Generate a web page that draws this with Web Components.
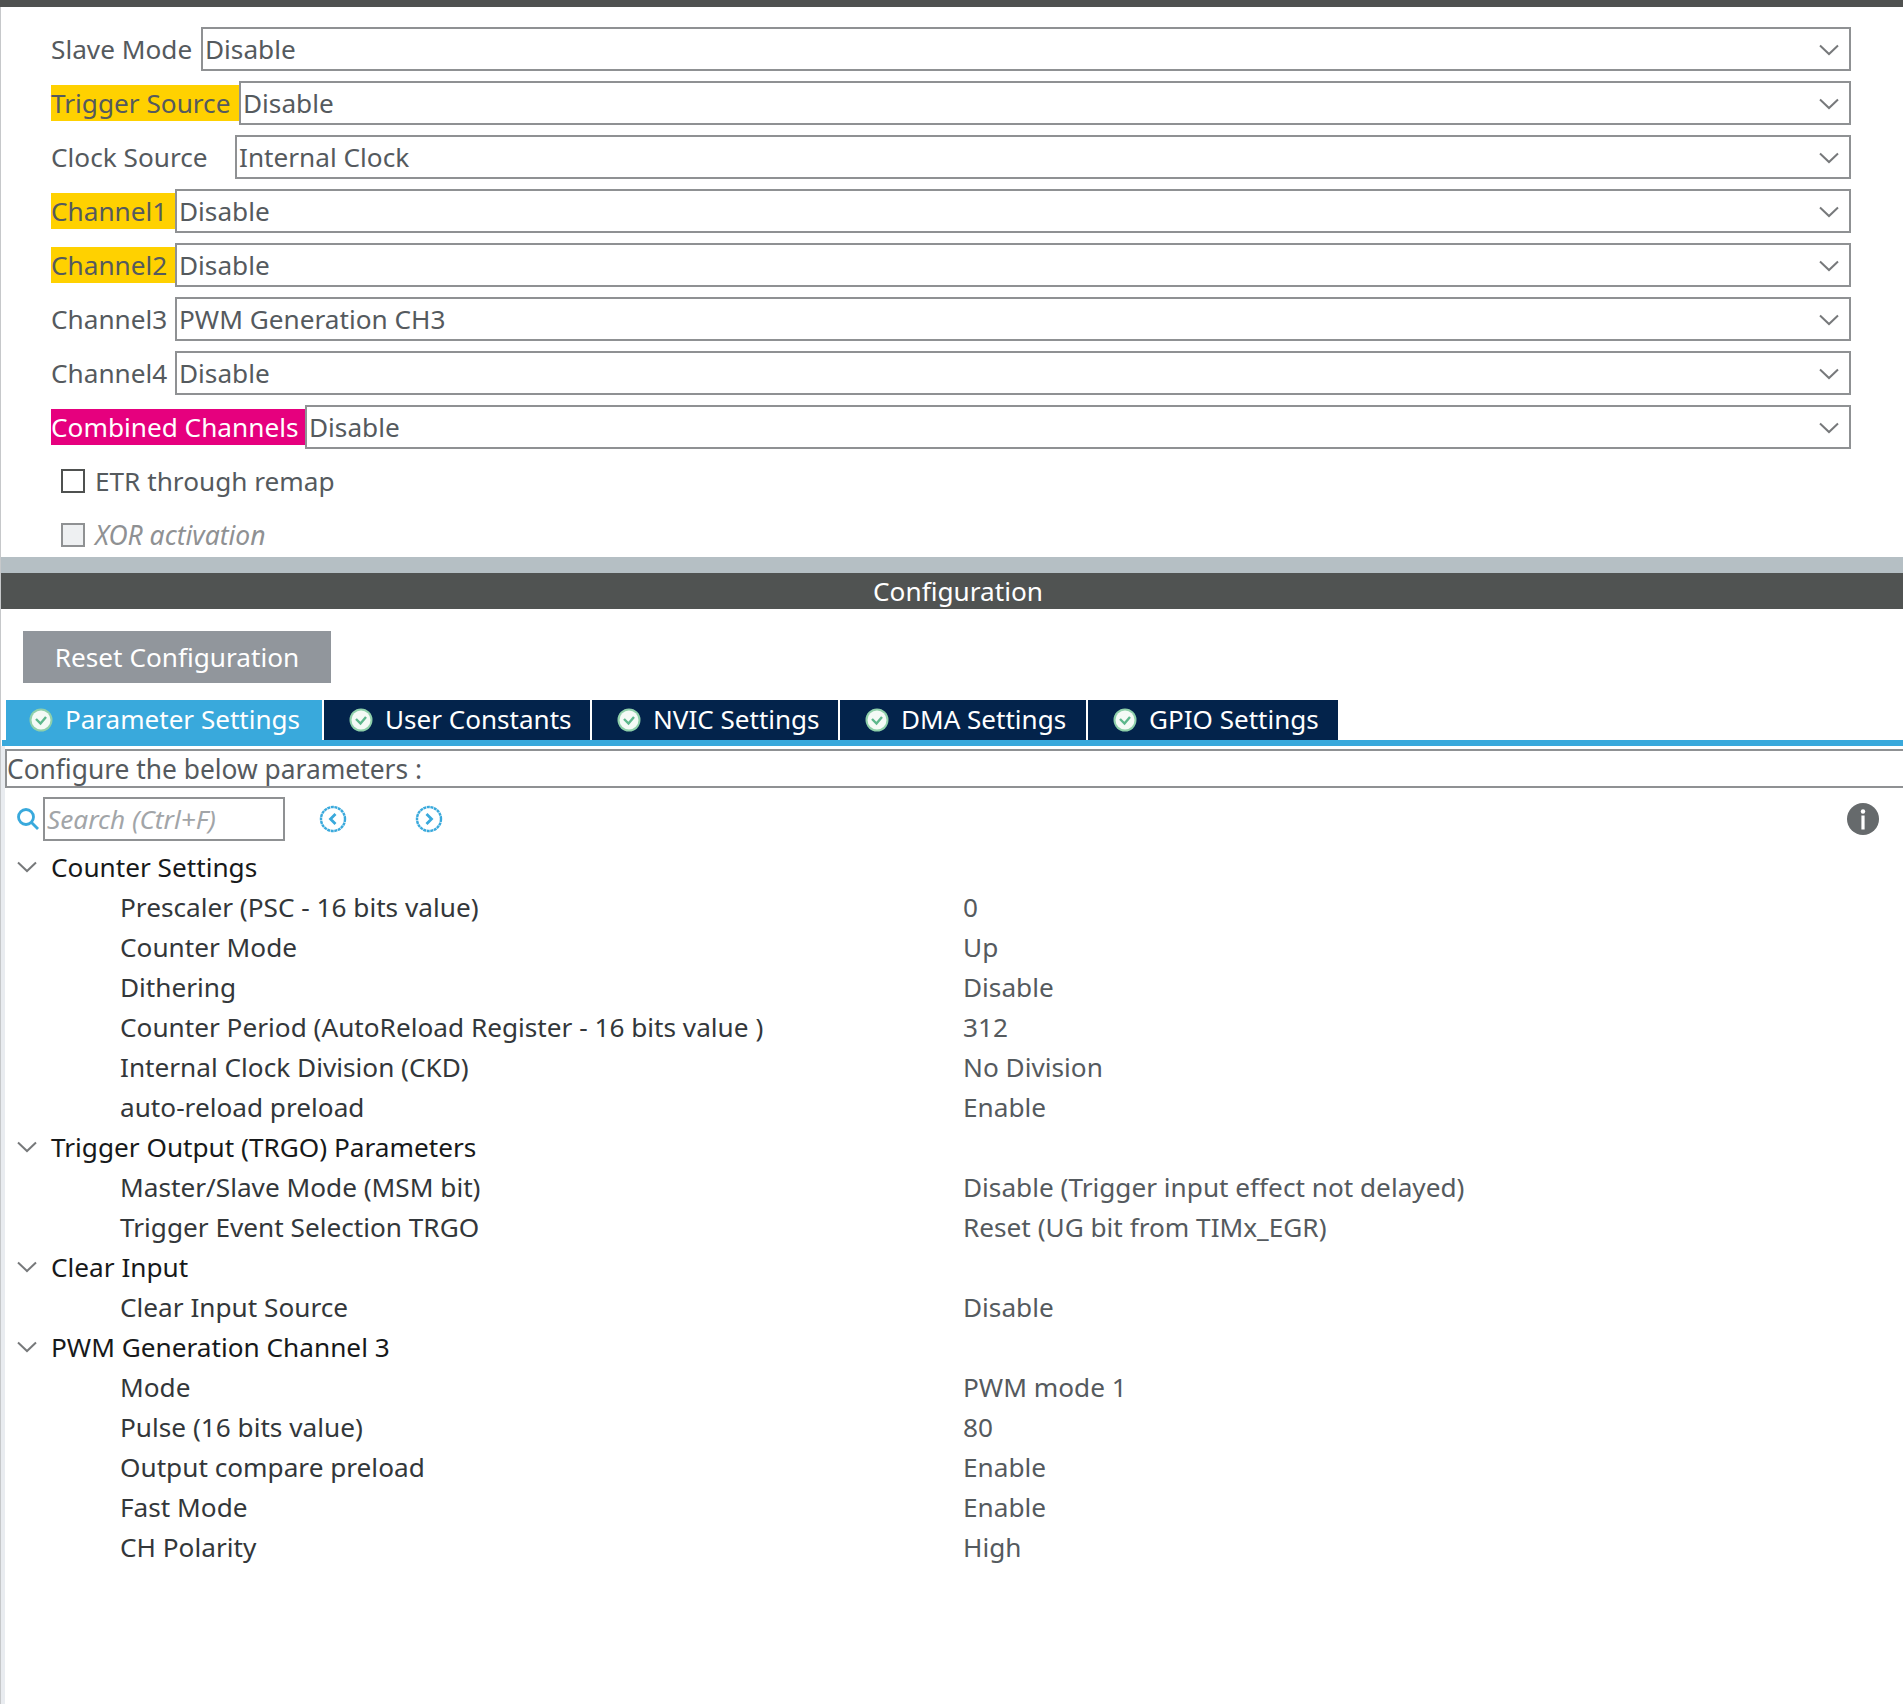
<!DOCTYPE html>
<html><head><meta charset="utf-8"><style>
html,body{margin:0;padding:0;background:#fff}
body{font-family:"Noto Sans",sans-serif;font-size:26.2px;color:#555a5e;width:1903px;height:1704px;overflow:hidden}
</style></head><body>
<stm-page>
 <stm-select-row label="Slave Mode" value="Disable" lw="150"></stm-select-row>
 <stm-select-row label="Trigger Source" value="Disable" lw="188" mark="#ffd100"></stm-select-row>
 <stm-select-row label="Clock Source" value="Internal Clock" lw="184"></stm-select-row>
 <stm-select-row label="Channel1" value="Disable" lw="124" mark="#ffd100"></stm-select-row>
 <stm-select-row label="Channel2" value="Disable" lw="124" mark="#ffd100"></stm-select-row>
 <stm-select-row label="Channel3" value="PWM Generation CH3" lw="124"></stm-select-row>
 <stm-select-row label="Channel4" value="Disable" lw="124"></stm-select-row>
 <stm-select-row label="Combined Channels" value="Disable" lw="254" mark="#e6007e" fg="#fff"></stm-select-row>
 <stm-check label="ETR through remap"></stm-check>
 <stm-check label="XOR activation" disabled></stm-check>
 <stm-config>
  <stm-tree-group label="Counter Settings">
   <stm-tree-row label="Prescaler (PSC - 16 bits value)" value="0"></stm-tree-row>
   <stm-tree-row label="Counter Mode" value="Up"></stm-tree-row>
   <stm-tree-row label="Dithering" value="Disable"></stm-tree-row>
   <stm-tree-row label="Counter Period (AutoReload Register - 16 bits value )" value="312"></stm-tree-row>
   <stm-tree-row label="Internal Clock Division (CKD)" value="No Division"></stm-tree-row>
   <stm-tree-row label="auto-reload preload" value="Enable"></stm-tree-row>
  </stm-tree-group>
  <stm-tree-group label="Trigger Output (TRGO) Parameters">
   <stm-tree-row label="Master/Slave Mode (MSM bit)" value="Disable (Trigger input effect not delayed)"></stm-tree-row>
   <stm-tree-row label="Trigger Event Selection TRGO" value="Reset (UG bit from TIMx_EGR)"></stm-tree-row>
  </stm-tree-group>
  <stm-tree-group label="Clear Input">
   <stm-tree-row label="Clear Input Source" value="Disable"></stm-tree-row>
  </stm-tree-group>
  <stm-tree-group label="PWM Generation Channel 3">
   <stm-tree-row label="Mode" value="PWM mode 1"></stm-tree-row>
   <stm-tree-row label="Pulse (16 bits value)" value="80"></stm-tree-row>
   <stm-tree-row label="Output compare preload" value="Enable"></stm-tree-row>
   <stm-tree-row label="Fast Mode" value="Enable"></stm-tree-row>
   <stm-tree-row label="CH Polarity" value="High"></stm-tree-row>
  </stm-tree-group>
 </stm-config>
</stm-page>
<script>
const esc=s=>String(s).replace(/&/g,'&amp;').replace(/"/g,'&quot;').replace(/</g,'&lt;');
class Base extends HTMLElement{
  constructor(){super();this.attachShadow({mode:'open'});}
  connectedCallback(){this.shadowRoot.innerHTML=this.render();}
  a(n){return esc(this.getAttribute(n)||'');}
}
class Page extends Base{render(){return `<style>
 :host{display:block;box-sizing:border-box;width:1903px;height:1704px;border-left:1px solid #c6c8ca;background:#fff}
 .top{height:7px;background:#4f5150;margin-left:-1px}
 .sel{display:flex;flex-direction:column;gap:10px;padding:20px 0 0 50px;width:1800px}
 </style><div class="top"></div><div class="sel"><slot></slot></div><slot name="cfg"></slot>`;}
  connectedCallback(){super.connectedCallback();const c=this.querySelector('stm-config');if(c)c.slot='cfg';}
}
class SelectRow extends Base{render(){
 const m=this.getAttribute('mark'),fg=this.getAttribute('fg');
 return `<style>
 :host{display:flex;align-items:center;height:44px}
 .l{width:${this.a('lw')}px;height:36px;line-height:36px;white-space:nowrap;flex:none;box-sizing:border-box;${m?`background:${m};`:''}${fg?`color:${fg};`:''}}
 .s{flex:1;height:44px;box-sizing:border-box;border:2px solid #8f9193;display:flex;align-items:center;padding:0 0 0 2px;line-height:38px;background:#fff}
 .v{flex:1}
 svg{width:20px;height:12px;margin:2px 10px 0 0;flex:none}
 </style><div class="l">${this.a('label')}</div><div class="s"><span class="v">${this.a('value')}</span>
 <svg viewBox="0 0 20 12" fill="none" stroke="#77797b" stroke-width="2"><path d="M1 1.5 10 10 19 1.5"/></svg></div>`;}}
class Check extends Base{render(){const d=this.hasAttribute('disabled');
 return `<style>
 :host{display:flex;align-items:center;height:44px;padding-left:10px;gap:10px;${d?'color:#8f9193;font-style:italic;font-size:26.5px;':''}}
 .b{width:24px;height:24px;box-sizing:border-box;border:2px solid ${d?'#8f9193':'#4f5150'};background:${d?'#eef0f2':'#fff'}}
 </style><div class="b"></div><span>${this.a('label')}</span>`;}}
const ok=`<svg viewBox="0 0 24 24" width="24" height="24" style="flex:none"><circle cx="12" cy="12" r="11.5" fill="#8fd0aa"/><circle cx="12" cy="12" r="9.5" fill="#f4faf6"/><path d="M7 11 11.5 15.5 17 9" fill="none" stroke="#5db78c" stroke-width="2.4"/></svg>`;
class Tab extends Base{render(){const act=this.hasAttribute('active');
 return `<style>
 :host{display:flex;align-items:center;box-sizing:border-box;height:40px;width:${this.a('w')}px;padding-left:${this.a('pl')||23}px;gap:12px;background:${act?'#39a9dc':'#03234b'};color:#fff;flex:none;white-space:nowrap;font-size:26.05px}
 span{position:relative;top:-1px}
 </style>${ok}<span>${this.a('label')}</span>`;}}
class Config extends Base{render(){return `<style>
 :host{display:block}
 .grey{height:16px;background:#b5bfc4}
 .title{height:36px;line-height:36px;background:#505352;color:#fff;text-align:center;padding-left:12px}
 .btn{display:block;box-sizing:border-box;margin:22px 0 0 22px;width:308px;height:52px;line-height:52px;background:#91969c;color:#fff;text-align:center}
 .tabs{display:flex;gap:2px;margin:17px 0 0 5px}
 .rule{height:6px;background:#39a9dc;margin-left:1px}
 .lower{border-left:4px solid #e9ecf0;height:958px}
 .desc{box-sizing:border-box;height:39px;line-height:37px;font-size:26.35px;border:2px solid #8f9193;border-right:0;white-space:nowrap;position:relative;top:3px}
 .tools{display:flex;align-items:center;height:44px;margin-top:12px;padding-left:11px}
 .search{box-sizing:border-box;width:242px;height:44px;line-height:40px;border:2px solid #8f9193;margin-left:3px;padding-left:2px;color:#a2a5a8;font-style:italic;white-space:nowrap;overflow:hidden}
 .nav{margin-left:34px}.nav+.nav{margin-left:68px}
 .info{margin-left:auto;margin-right:24px}
 .tree{margin-top:6px}
 </style>
 <div class="grey"></div><div class="title">Configuration</div>
 <div class="btn">Reset Configuration</div>
 <div class="tabs">
  <stm-tab active w="316" pl="23" label="Parameter Settings"></stm-tab>
  <stm-tab w="266" pl="25" label="User Constants"></stm-tab>
  <stm-tab w="246" pl="25" label="NVIC Settings"></stm-tab>
  <stm-tab w="246" pl="25" label="DMA Settings"></stm-tab>
  <stm-tab w="250" pl="25" label="GPIO Settings"></stm-tab>
 </div>
 <div class="rule"></div>
 <div class="lower">
 <div class="desc">Configure the below parameters :</div>
 <div class="tools">
  <svg width="24" height="24" viewBox="0 0 24 24" fill="none" stroke="#39a9dc" stroke-width="2.8"><circle cx="10" cy="10" r="7.5"/><path d="M15.5 15.5 22 22"/></svg>
  <div class="search">Search (Ctrl+F)</div>
  <svg class="nav" width="28" height="28" viewBox="0 0 28 28" fill="none" stroke="#39a9dc" stroke-width="2.4"><circle cx="14" cy="14" r="12" stroke-dasharray="3 .6"/><path d="M16.5 9 11.5 14 16.5 19" stroke-width="2.8"/></svg>
  <svg class="nav" width="28" height="28" viewBox="0 0 28 28" fill="none" stroke="#39a9dc" stroke-width="2.4"><circle cx="14" cy="14" r="12" stroke-dasharray="3 .6"/><path d="M11.5 9 16.5 14 11.5 19" stroke-width="2.8"/></svg>
  <svg class="info" width="32" height="32" viewBox="0 0 32 32"><circle cx="16" cy="16" r="16" fill="#666a6c"/><circle cx="16" cy="8.5" r="2.2" fill="#fff"/><rect x="14.4" y="12.5" width="3.2" height="14" fill="#fff"/></svg>
 </div>
 <div class="tree"><slot></slot></div>
 </div>`;}}
class Group extends Base{render(){return `<style>
 :host{display:block}
 .h{display:flex;align-items:center;height:40px;color:#17191a;padding-left:12px;white-space:nowrap}
 svg{width:20px;height:12px;margin-right:14px;flex:none}
 </style><div class="h"><svg viewBox="0 0 20 12" fill="none" stroke="#77797b" stroke-width="2"><path d="M1 1.5 10 10 19 1.5"/></svg>${this.a('label')}</div><slot></slot>`;}}
class TreeRow extends Base{render(){return `<style>
 :host{display:flex;align-items:center;height:40px;white-space:nowrap}
 .l{width:958px;padding-left:115px;box-sizing:border-box;color:#33373a;flex:none}
 .v{color:#555a5e}
 </style><div class="l">${this.a('label')}</div><div class="v">${this.a('value')}</div>`;}}
customElements.define('stm-tab',Tab);
customElements.define('stm-page',Page);
customElements.define('stm-select-row',SelectRow);
customElements.define('stm-check',Check);
customElements.define('stm-config',Config);
customElements.define('stm-tree-group',Group);
customElements.define('stm-tree-row',TreeRow);
</script></body></html>
